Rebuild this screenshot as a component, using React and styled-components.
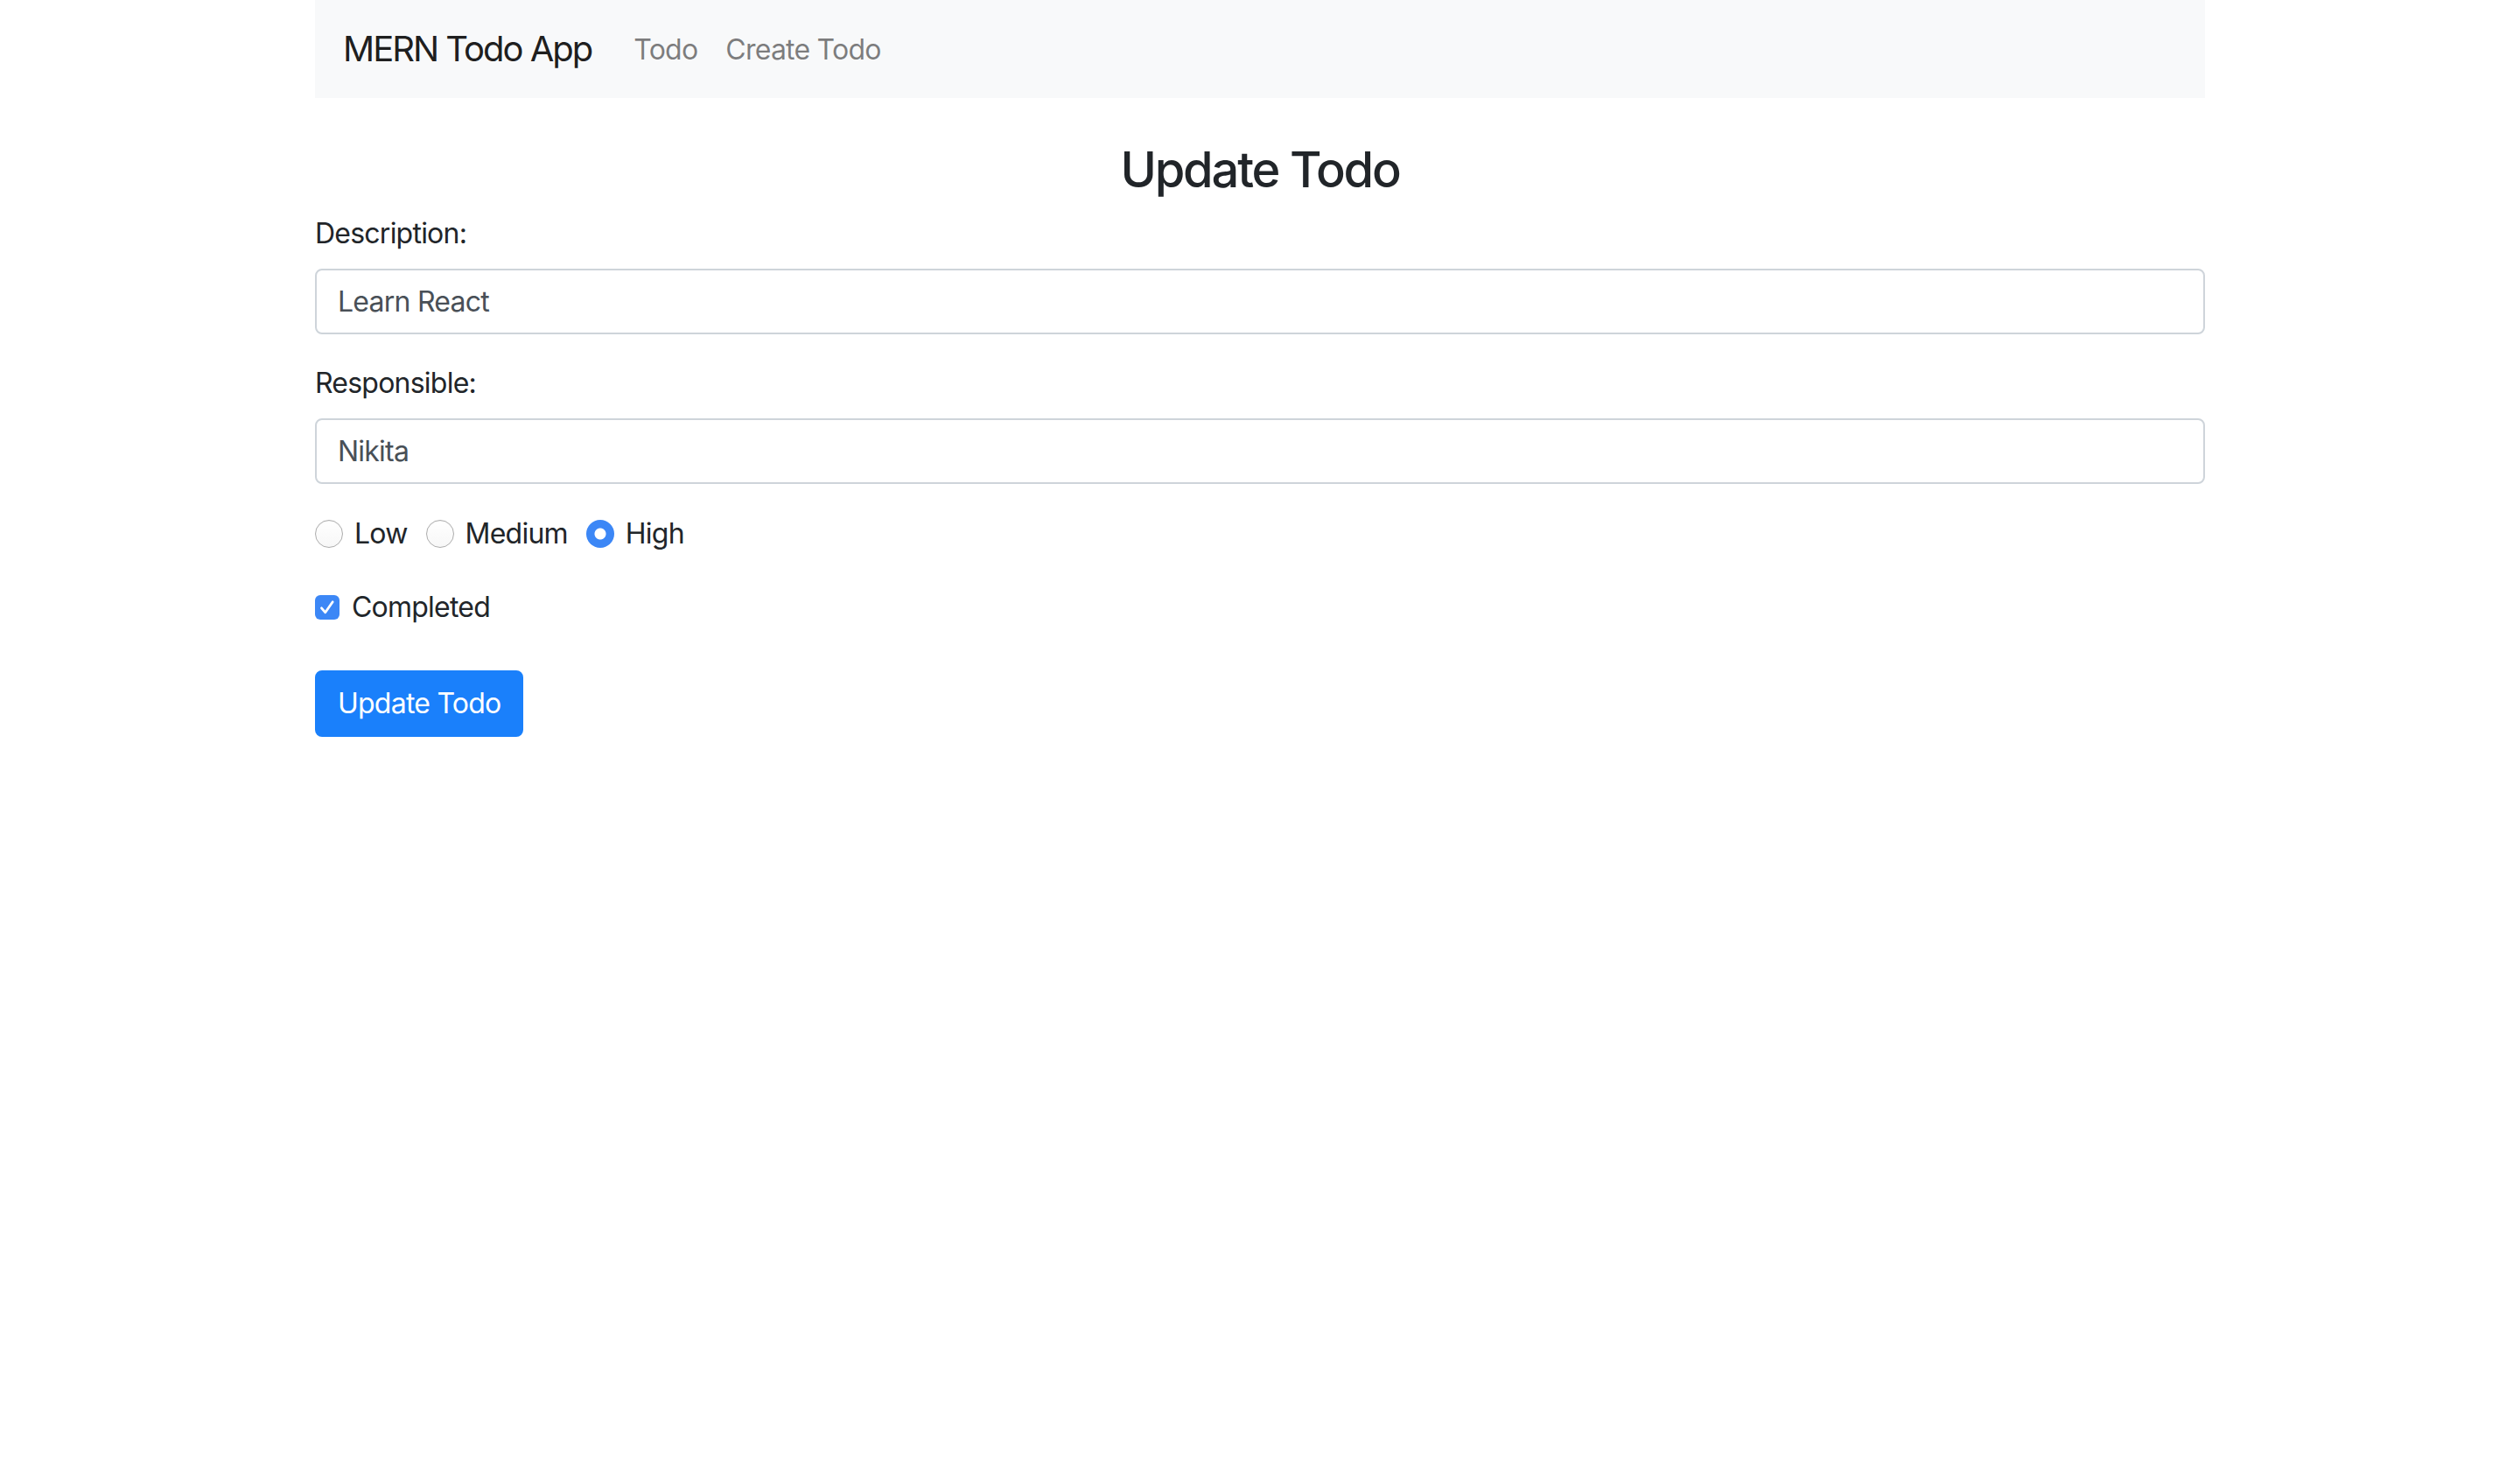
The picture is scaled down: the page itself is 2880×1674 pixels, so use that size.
import React from "react";
import styled, { createGlobalStyle } from "styled-components";

const GlobalStyle = createGlobalStyle`
  html, body {
    margin: 0;
    padding: 0;
    background: #ffffff;
  }
  body {
    font-family: Inter, "Noto Sans", "Liberation Sans", sans-serif;
    font-size: 32px;
    line-height: 1.5;
    letter-spacing: -0.024em;
    color: #212529;
    -webkit-font-smoothing: antialiased;
  }
  * { box-sizing: border-box; }
`;

const Container = styled.div`
  width: 2160px;
  margin: 0 auto;
`;

const Navbar = styled.nav`
  display: flex;
  align-items: center;
  padding: 16px 32px;
  background: #f8f9fa;
`;

const Brand = styled.a`
  font-size: 40px;
  line-height: 60px;
  padding: 10px 0;
  margin-right: 32px;
  letter-spacing: -0.05em;
  color: rgba(0, 0, 0, 0.9);
  text-decoration: none;
  white-space: nowrap;
`;

const NavList = styled.ul`
  display: flex;
  list-style: none;
  margin: 0;
  padding: 0;
`;

const NavLink = styled.a`
  display: block;
  padding: 17px 16px 15px;
  font-size: 32px;
  line-height: 48px;
  color: rgba(0, 0, 0, 0.5);
  text-decoration: none;
`;

const Spacer = styled.div`
  height: ${(p) => p.$h}px;
`;

const Title = styled.h3`
  margin: 0 0 16px;
  padding-top: 1px;
  font-size: 56px;
  font-weight: 500;
  line-height: 66px;
  letter-spacing: -0.039em;
  text-align: center;
`;

const FormGroup = styled.div`
  margin-bottom: 32px;
`;

const Label = styled.label`
  display: inline-block;
  margin-bottom: 16px;
`;

const Input = styled.input`
  display: block;
  width: 100%;
  height: 75px;
  padding: 12px 24px;
  font-family: inherit;
  font-size: 32px;
  line-height: 48px;
  letter-spacing: inherit;
  color: #495057;
  background: #fff;
  border: 2px solid #ced4da;
  border-radius: 8px;
  outline: none;
`;

const RadioGroup = styled.div`
  display: flex;
  align-items: center;
  height: 50px;
  margin-bottom: 35px;
`;

const RadioOption = styled.label`
  display: inline-flex;
  align-items: center;
  margin-right: 21px;
  line-height: 48px;
`;

const Radio = styled.span`
  width: 32px;
  height: 32px;
  border-radius: 50%;
  margin-right: 13px;
  flex: none;
  ${(p) =>
    p.$checked
      ? `
    background: radial-gradient(circle at center, #ffffff 0 6px, #3c87f6 7px);
    border: none;
  `
      : `
    background: linear-gradient(#ffffff, #f7f7f7);
    border: 1.5px solid #adadad;
    box-shadow: inset 0 1px 1px rgba(0,0,0,0.05);
  `}
`;

const CheckRow = styled.label`
  display: flex;
  align-items: center;
  height: 48px;
`;

const CheckBox = styled.span`
  display: inline-flex;
  align-items: center;
  justify-content: center;
  width: 28px;
  height: 28px;
  margin-right: 14px;
  border-radius: 6px;
  background: #3c87f6;
  flex: none;
`;

const Button = styled.button`
  display: inline-block;
  height: 76px;
  padding: 12px 24px;
  font-family: inherit;
  font-size: 32px;
  line-height: 48px;
  letter-spacing: inherit;
  color: #fff;
  background: #1a80fb;
  border: 2px solid #1a80fb;
  border-radius: 8px;
  cursor: pointer;
`;

const priorities = [
  { label: "Low", checked: false },
  { label: "Medium", checked: false },
  { label: "High", checked: true },
];

export default function App() {
  return (
    <>
      <GlobalStyle />
      <Container>
        <Navbar>
          <Brand href="#">MERN Todo App</Brand>
          <NavList>
            <li>
              <NavLink href="#">Todo</NavLink>
            </li>
            <li>
              <NavLink href="#">Create Todo</NavLink>
            </li>
          </NavList>
        </Navbar>
        <Spacer $h={48} />
        <Title>Update Todo</Title>
        <form onSubmit={(e) => e.preventDefault()}>
          <FormGroup>
            <Label>Description: </Label>
            <Input type="text" defaultValue="Learn React" />
          </FormGroup>
          <FormGroup>
            <Label>Responsible: </Label>
            <Input type="text" defaultValue="Nikita" />
          </FormGroup>
          <RadioGroup>
            {priorities.map((p) => (
              <RadioOption key={p.label}>
                <Radio $checked={p.checked} />
                {p.label}
              </RadioOption>
            ))}
          </RadioGroup>
          <CheckRow>
            <CheckBox>
              <svg width="22" height="22" viewBox="0 0 22 22" fill="none">
                <path
                  d="M4.5 11.8 L8.8 16.8 L17.2 4.8"
                  stroke="#ffffff"
                  strokeWidth="2.8"
                  strokeLinecap="round"
                  strokeLinejoin="round"
                />
              </svg>
            </CheckBox>
            Completed
          </CheckRow>
          <Spacer $h={48} />
          <FormGroup>
            <Button type="submit">Update Todo</Button>
          </FormGroup>
        </form>
      </Container>
    </>
  );
}
